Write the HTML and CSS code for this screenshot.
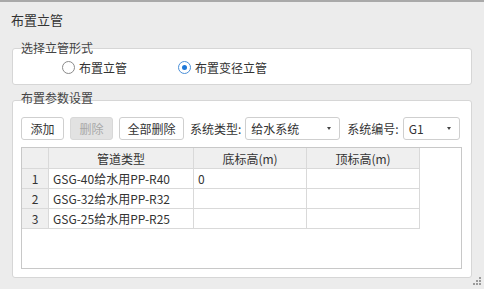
FILE: index.html
```html
<!DOCTYPE html>
<html lang="zh-CN">
<head>
  <meta charset="UTF-8">
  <title>布置立管</title>
  <link rel="stylesheet" href="styles.css">
</head>
<body>
  <div class="window">
    <div class="title">布置立管</div>

    <div class="group-label">选择立管形式</div>
    <div class="group group-type">
      <label class="radio"><span class="dot"></span>布置立管</label>
      <label class="radio checked"><span class="dot"></span>布置变径立管</label>
    </div>

    <div class="group-label second">布置参数设置</div>
    <div class="group group-params">
      <div class="toolbar">
        <button class="btn">添加</button>
        <button class="btn" disabled>删除</button>
        <button class="btn wide">全部删除</button>
        <span class="field-label">系统类型:</span>
        <div class="select sys-type"><span>给水系统</span><i class="caret"></i></div>
        <span class="field-label">系统编号:</span>
        <div class="select sys-no"><span>G1</span><i class="caret"></i></div>
      </div>

      <div class="grid-box">
        <table class="grid">
          <thead>
            <tr>
              <th class="idx"></th>
              <th class="c1">管道类型</th>
              <th class="c2">底标高(m)</th>
              <th class="c3">顶标高(m)</th>
            </tr>
          </thead>
          <tbody>
            <tr><td class="idx">1</td><td>GSG-40给水用PP-R40</td><td>0</td><td></td></tr>
            <tr><td class="idx">2</td><td>GSG-32给水用PP-R32</td><td></td><td></td></tr>
            <tr><td class="idx">3</td><td>GSG-25给水用PP-R25</td><td></td><td></td></tr>
          </tbody>
        </table>
      </div>
    </div>

    <svg class="grip" width="10" height="10" viewBox="0 0 10 10">
      <rect x="8" y="0" width="2" height="2" fill="#9a9a9a"/>
      <rect x="5" y="3" width="2" height="2" fill="#9a9a9a"/>
      <rect x="8" y="3" width="2" height="2" fill="#9a9a9a"/>
      <rect x="2" y="6" width="2" height="2" fill="#9a9a9a"/>
      <rect x="5" y="6" width="2" height="2" fill="#9a9a9a"/>
      <rect x="8" y="6" width="2" height="2" fill="#9a9a9a"/>
    </svg>
  </div>
</body>
</html>
```

FILE: styles.css
```css
body {
  margin: 0;
  font-family: "Noto Sans CJK SC", "Noto Sans", sans-serif;
  font-size: 12px;
  color: #333;
  background: #ececec;
}
.window {
  position: relative;
  height: 287px;
  border-top: 2px solid #a9a9a9;
  overflow: hidden;
}
.title {
  margin: 9px 0 0 11px;
  font-size: 13px;
  line-height: 18px;
}
.group-label {
  position: relative;
  z-index: 1;
  margin: 12px 0 -7px 21px;
  line-height: 14px;
  color: #444;
}
.group-label.second {
  margin-top: 6px;
  margin-bottom: -5px;
}
.group {
  margin: 0 12px;
  background: #fff;
  border: 1px solid #d6d6d6;
  border-radius: 3px;
}
.group-type {
  height: 35px;
  display: flex;
  align-items: center;
  padding-left: 49px;
}
.radio {
  display: flex;
  align-items: center;
  gap: 4px;
  margin-right: 51px;
  line-height: 14px;
  padding-top: 2px;
}
.dot {
  width: 11px;
  height: 11px;
  border: 1px solid #8a8a8a;
  border-radius: 50%;
  background: #fff;
  display: flex;
  align-items: center;
  justify-content: center;
}
.checked .dot {
  border-color: #4a8fd8;
}
.checked .dot::after {
  content: "";
  width: 5px;
  height: 5px;
  border-radius: 50%;
  background: #1e78d8;
}
.group-params {
  height: 160px;
  padding: 16px 9px 0 8px;
}
.toolbar {
  display: flex;
  align-items: center;
  height: 23px;
}
.toolbar > * {
  flex-shrink: 0;
  white-space: nowrap;
}
.btn {
  height: 23px;
  width: 43px;
  margin-right: 6px;
  padding: 0;
  font: inherit;
  color: #333;
  background: #fff;
  border: 1px solid #cfcfcf;
  border-radius: 3px;
}
.btn.wide {
  width: 65px;
}
.btn:disabled {
  background: #e2e2e2;
  border-color: #d8d8d8;
  color: #a8a8a8;
}
.field-label {
  margin-right: 4px;
}
.select {
  height: 23px;
  box-sizing: border-box;
  display: flex;
  align-items: center;
  justify-content: space-between;
  padding: 0 8px 0 5px;
  background: #fff;
  border: 1px solid #cfcfcf;
  border-radius: 3px;
}
.sys-type {
  width: 95px;
  margin-right: 7px;
}
.sys-no {
  width: 57px;
}
.caret {
  width: 0;
  height: 0;
  border-left: 2.5px solid transparent;
  border-right: 2.5px solid transparent;
  border-top: 3px solid #444;
}
.grid-box {
  margin-top: 7px;
  height: 120px;
  background: #fff;
  border: 1px solid #c8c8c8;
}
.grid {
  border-collapse: collapse;
  table-layout: fixed;
  width: 396px;
}
.grid th,
.grid td {
  border: 1px solid #d9d9d9;
  height: 19px;
  padding: 0 4px;
  font-weight: normal;
  white-space: nowrap;
  text-align: left;
}
.grid tr:first-child th,
.grid tr:first-child td {
  border-top: none;
}
.grid th:first-child,
.grid td:first-child {
  border-left: none;
}
.grid th {
  height: 20px;
  background: #efefef;
  text-align: center;
}
.grid .idx {
  width: 26px;
  padding: 0;
  background: #efefef;
  text-align: center;
}
.grid .c1 { width: 136px; }
.grid .c2 { width: 104px; }
.grid .c3 { width: 104px; }
.grip {
  position: absolute;
  right: 3px;
  bottom: 2px;
}
```
